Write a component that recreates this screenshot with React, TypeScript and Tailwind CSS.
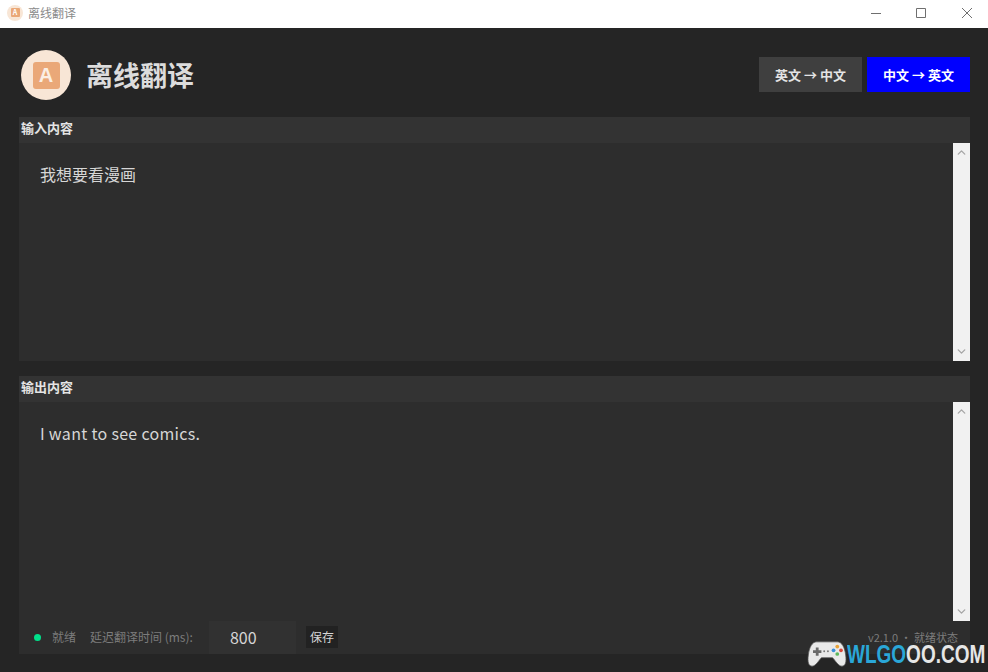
import { ChevronUp, ChevronDown } from 'lucide-react';

const cjk = "font-['Noto_Sans_CJK_SC','Noto_Sans',sans-serif]";

function Scrollbar() {
  return (
    <div className="w-[17px] shrink-0 bg-[#f1f1f1] flex flex-col items-center justify-between py-[3px] text-[#a6a6a6]">
      <ChevronUp size={13} strokeWidth={2.5} />
      <ChevronDown size={13} strokeWidth={2.5} />
    </div>
  );
}

function Panel({ label, text, height, tracking }: { label: string; text: string; height: string; tracking: string }) {
  return (
    <section className="flex flex-col">
      <div className="h-[26px] bg-[#333333] flex items-center pl-[2px] pb-[5px] text-[13px] font-bold text-[#e4e4e4]">
        {label}
      </div>
      <div className={`flex bg-[#2d2d2d] ${height}`}>
        <div className={`flex-1 pl-[21px] pt-[18px] text-[16px] leading-[26px] text-[#d6d6d6] ${tracking}`}>{text}</div>
        <Scrollbar />
      </div>
    </section>
  );
}

function Gamepad() {
  return (
    <svg width="40" height="28" viewBox="0 0 42 30" className="shrink-0">
      <path
        d="M10 2h22c5 0 8 6 9 14 1 7 0 12-4 12-4 0-7-6-10-9H15c-3 3-6 9-10 9-4 0-5-5-4-12C2 8 5 2 10 2z"
        fill="#e9e9e9"
        stroke="#555"
        strokeWidth="0.8"
      />
      <path d="M9 8h3v3h3v3h-3v3H9v-3H6v-3h3z" fill="#6a6a6a" />
      <circle cx="18" cy="12" r="1" fill="#777" />
      <circle cx="22" cy="12" r="1" fill="#777" />
      <circle cx="32" cy="7" r="2" fill="#e8a33a" />
      <circle cx="36" cy="11" r="2" fill="#d9483b" />
      <circle cx="28" cy="11" r="2" fill="#3a8fd9" />
      <circle cx="32" cy="15" r="2" fill="#5cb85c" />
    </svg>
  );
}

export default function App() {
  return (
    <div className={`relative w-[988px] h-[672px] overflow-hidden bg-[#252525] flex flex-col ${cjk}`}>
      <div className="h-[28px] shrink-0 bg-white flex items-center pb-[3px]">
        <div className="ml-[7px] w-[16px] h-[16px] rounded-full bg-[#f8e6d6] flex items-center justify-center">
          <div className="w-[9px] h-[9px] rounded-[1px] bg-[#eaa878] flex items-center justify-center text-[7px] leading-none font-bold text-white">
            A
          </div>
        </div>
        <span className="ml-[5px] text-[12px] text-[#8a8a8a]">离线翻译</span>
        <div className="ml-auto flex items-center text-[#6f6f6f]">
          <svg width="10" height="10" viewBox="0 0 10 10" className="mr-[35px]" stroke="currentColor" fill="none">
            <path d="M0 5.5h10" />
          </svg>
          <svg width="10" height="10" viewBox="0 0 10 10" className="mr-[36px]" stroke="currentColor" fill="none">
            <path d="M.5.5h9v9h-9z" />
          </svg>
          <svg width="10" height="10" viewBox="0 0 10 10" className="mr-[16px]" stroke="currentColor" fill="none">
            <path d="M0 0l10 10M10 0L0 10" />
          </svg>
        </div>
      </div>

      <div className="flex-1 flex flex-col pl-[19px] pr-[18px]">
        <header className="h-[89px] shrink-0 flex items-center pt-[5px]">
          <div className="ml-[2px] w-[50px] h-[50px] rounded-full bg-[#f8e6d6] flex items-center justify-center">
            <div className="w-[27px] h-[27px] rounded-[3px] bg-[#eaa878] flex items-center justify-center font-['Liberation_Sans',sans-serif] text-[20px] leading-none font-bold text-[#fbeee3]">
              A
            </div>
          </div>
          <h1 className="ml-[15px] text-[27px] font-bold text-[#dcdcdc]">离线翻译</h1>
          <div className="ml-auto flex gap-[5px] mb-[1px]">
            <button className="w-[103px] h-[35px] bg-[#3f3f3f] text-[13px] font-bold text-[#e4e4e4]">英文 → 中文</button>
            <button className="w-[103px] h-[35px] bg-[#0000ff] text-[13px] font-bold text-white">中文 → 英文</button>
          </div>
        </header>

        <div className="flex flex-col gap-[15px]">
          <Panel label="输入内容" text="我想要看漫画" height="h-[218px]" tracking="tracking-normal" />
          <Panel label="输出内容" text="I want to see comics." height="h-[219px]" tracking="tracking-[0.3px]" />
        </div>

        <footer className="h-[33px] shrink-0 bg-[#2d2d2d] flex items-center pl-[15px] text-[12px] text-[#7c7c7c]">
          <span className="w-[7px] h-[7px] rounded-full bg-[#00e08a]" />
          <span className="ml-[11px] mb-[2px]">就绪</span>
          <span className="ml-[14px] mb-[2px]">延迟翻译时间 (ms):</span>
          <div className="ml-[16px] w-[87px] h-[33px] bg-[#313131] flex items-center pl-[21px] pb-[2px] text-[16px] text-[#d6d6d6]">800</div>
          <button className="ml-[10px] w-[32px] h-[22px] mb-[2px] bg-[#222222] text-[12px] text-[#d6d6d6]">保存</button>
          <span className="ml-auto mr-[12px] mb-[1px] text-[11px]">v2.1.0 • 就绪状态</span>
        </footer>
      </div>

      <div className="absolute left-[807px] top-[640px] w-[181px] flex items-center">
        <Gamepad />
        <span className="origin-left scale-x-[0.76] whitespace-nowrap font-['Liberation_Sans',sans-serif] text-[25px] leading-none font-bold">
          <span className="text-[#2aa7d8]">WLGO</span>
          <span className="text-[#e6e6e6]">OO.COM</span>
        </span>
      </div>
    </div>
  );
}
